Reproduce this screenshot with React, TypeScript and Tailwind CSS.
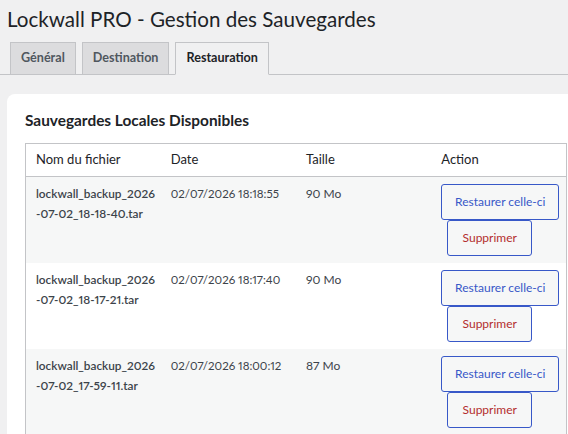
const backups = [
    { name: ["lockwall_backup_2026", "-07-02_18-18-40.tar"], date: "02/07/2026 18:18:55", size: "90 Mo" },
    { name: ["lockwall_backup_2026", "-07-02_18-17-21.tar"], date: "02/07/2026 18:17:40", size: "90 Mo" },
    { name: ["lockwall_backup_2026", "-07-02_17-59-11.tar"], date: "02/07/2026 18:00:12", size: "87 Mo" },
]

const tabs = [
    { label: "Général", active: false },
    { label: "Destination", active: false },
    { label: "Restauration", active: true },
]

export default function App() {
    return (
        <div className="min-h-screen w-full overflow-hidden bg-[#f0f0f1] pl-[7px] pt-[4px] font-['Segoe_UI','Lato',sans-serif] text-[#3c434a] proportional-nums">
            <h1 className="text-[20.6px] leading-[30px] text-[#1d2327]">Lockwall PRO - Gestion des Sauvegardes</h1>

            {/* Tabs */}
            <nav className="-ml-[7px] mt-[8px] flex h-[33px] items-end border-b border-[#c3c4c7] pl-[10px]">
                {tabs.map((tab) => (
                    <a
                        key={tab.label}
                        className={`-mb-px mr-[6px] flex h-[33px] items-center border border-[#c3c4c7] px-[10px] text-[12.6px] font-bold ${tab.active ? "border-b-[#f0f0f1] bg-[#f0f0f1] text-[#1d2327]" : "bg-[#dcdcde] text-[#50575e]"}`}
                    >
                        {tab.label}
                    </a>
                ))}
            </nav>

            {/* Card */}
            <div className="mt-[19px] w-[600px] rounded-[8px] bg-white pb-[20px] pl-[18px] pt-[16px]">
                <h2 className="text-[15.4px] font-bold leading-[20px] text-[#1d2327]">Sauvegardes Locales Disponibles</h2>

                <table className="mt-[13px] w-[542px] table-fixed border-collapse border border-[#c3c4c7] text-[12px]">
                    <thead>
                        <tr className="border-b border-[#c3c4c7] text-left text-[13px]">
                            <th className="h-[33px] px-[10px] font-normal text-[#1d2327]">Nom du fichier</th>
                            <th className="px-[10px] font-normal text-[#1d2327]">Date</th>
                            <th className="px-[10px] font-normal text-[#1d2327]">Taille</th>
                            <th className="px-[10px] font-normal text-[#1d2327]">Action</th>
                        </tr>
                    </thead>
                    <tbody>
                        {backups.map((b, i) => (
                            <tr key={b.date} className={i % 2 === 0 ? "bg-[#f6f7f7]" : "bg-white"}>
                                <td className="h-[86px] whitespace-nowrap px-[10px] pt-[7px] align-top text-[11.8px] font-semibold leading-[20px]">
                                    {b.name[0]}
                                    <br />
                                    {b.name[1]}
                                </td>
                                <td className="whitespace-nowrap px-[10px] pt-[7px] align-top text-[11.5px] leading-[20px]">{b.date}</td>
                                <td className="px-[10px] pt-[7px] align-top leading-[20px]">{b.size}</td>
                                <td className="px-[10px] pt-[7px] align-top">
                                    <div className="flex flex-col items-start">
                                        <button className="h-[36px] w-[118px] rounded-[3px] border border-[#3858c8] bg-[#f6f7f7] text-[12px] text-[#3858c8]">
                                            Restaurer celle-ci
                                        </button>
                                        <button className="ml-[6px] h-[36px] w-[85px] rounded-[3px] border border-[#3858c8] bg-[#f6f7f7] text-[12px] text-[#b32d2e]">
                                            Supprimer
                                        </button>
                                    </div>
                                </td>
                            </tr>
                        ))}
                    </tbody>
                </table>
            </div>
        </div>
    )
}
